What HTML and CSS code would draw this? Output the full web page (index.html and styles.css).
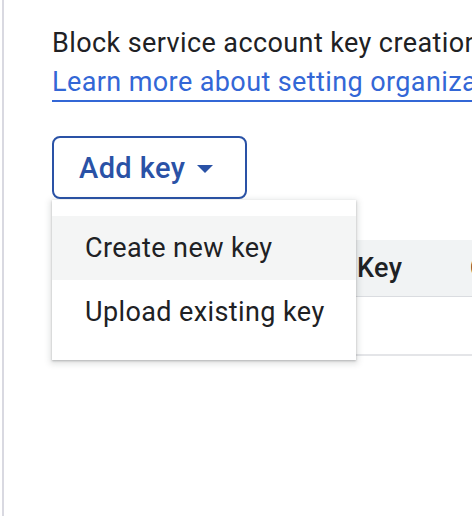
FILE: index.html
```html
<!DOCTYPE html>
<html lang="en">
<head>
<meta charset="utf-8">
<title>Keys</title>
<link rel="stylesheet" href="styles.css">
</head>
<body>
<div class="page">
  <div class="content">
    <p class="intro">Block service account key creation using organization policies.<br>
      <a class="link" href="#">Learn more about setting organization policies for service accounts</a></p>
    <div class="actions">
      <button class="add-btn" type="button">
        <span>Add key</span>
        <svg class="caret" width="16" height="8" viewBox="0 0 16 8" aria-hidden="true"><polygon points="0,0 16,0 8,8" fill="currentColor"/></svg>
      </button>
      <ul class="menu">
        <li class="menu-item active">Create new key</li>
        <li class="menu-item">Upload existing key</li>
      </ul>
    </div>
    <div class="table">
      <div class="thead">
        <div class="th th-first"></div>
        <div class="th th-key">Key</div>
        <div class="th th-date">Creation date</div>
      </div>
      <div class="trow"></div>
    </div>
  </div>
</div>
</body>
</html>
```
FILE: styles.css
```css
html, body {
  margin: 0;
  padding: 0;
  background: #ffffff;
  overflow: hidden;
}
body {
  font-family: Roboto, "Liberation Sans", Arial, sans-serif;
  color: #202124;
  width: 472px;
  height: 516px;
}
.page {
  margin-left: 2px;
  border-left: 2px solid #d9d9e1;
  height: 516px;
  overflow: hidden;
}
.content {
  padding-left: 48px;
  padding-top: 24px;
}
.intro {
  margin: 0;
  font-size: 27px;
  line-height: 39px;
  white-space: nowrap;
  letter-spacing: 0.4px;
}
.link {
  color: #3367d6;
  text-decoration: underline;
  text-decoration-thickness: 2px;
  text-underline-position: under;
  text-underline-offset: 2px;
}
.actions {
  position: relative;
  margin-top: 34px;
}
.add-btn {
  display: flex;
  align-items: center;
  gap: 12px;
  box-sizing: border-box;
  width: 195px;
  height: 63px;
  padding: 0 0 0 25px;
  border: 2px solid #2a52a6;
  border-radius: 8px;
  background: #ffffff;
  color: #2a52a6;
  font-family: Roboto, "Liberation Sans", Arial, sans-serif;
  font-size: 29px;
  font-weight: 500;
  letter-spacing: 0.4px;
}
.caret {
  display: block;
  margin-top: 2px;
}
.menu {
  position: absolute;
  top: 64px;
  left: 0;
  width: 304px;
  margin: 0;
  padding: 16px 0;
  list-style: none;
  background: #ffffff;
  box-shadow: 0 2px 6px 2px rgba(60, 64, 67, 0.15), 0 1px 2px rgba(60, 64, 67, 0.3);
  z-index: 2;
}
.menu-item {
  height: 64px;
  display: flex;
  align-items: center;
  padding-left: 33px;
  font-size: 27px;
  letter-spacing: 0.4px;
  color: #202124;
  white-space: nowrap;
}
.menu-item.active {
  background: #f4f5f5;
}
.table {
  margin-top: 41px;
  width: 480px;
}
.thead {
  display: grid;
  grid-template-columns: 305px 113px 1fr;
  height: 56px;
  align-items: center;
  background: #f1f3f4;
  border-bottom: 1px solid #dadce0;
  font-size: 27px;
  font-weight: 500;
  letter-spacing: 0.4px;
  white-space: nowrap;
}
.th-date {
  overflow: hidden;
}
.trow {
  height: 57px;
  border-bottom: 2px solid #e4e5e8;
}
```
